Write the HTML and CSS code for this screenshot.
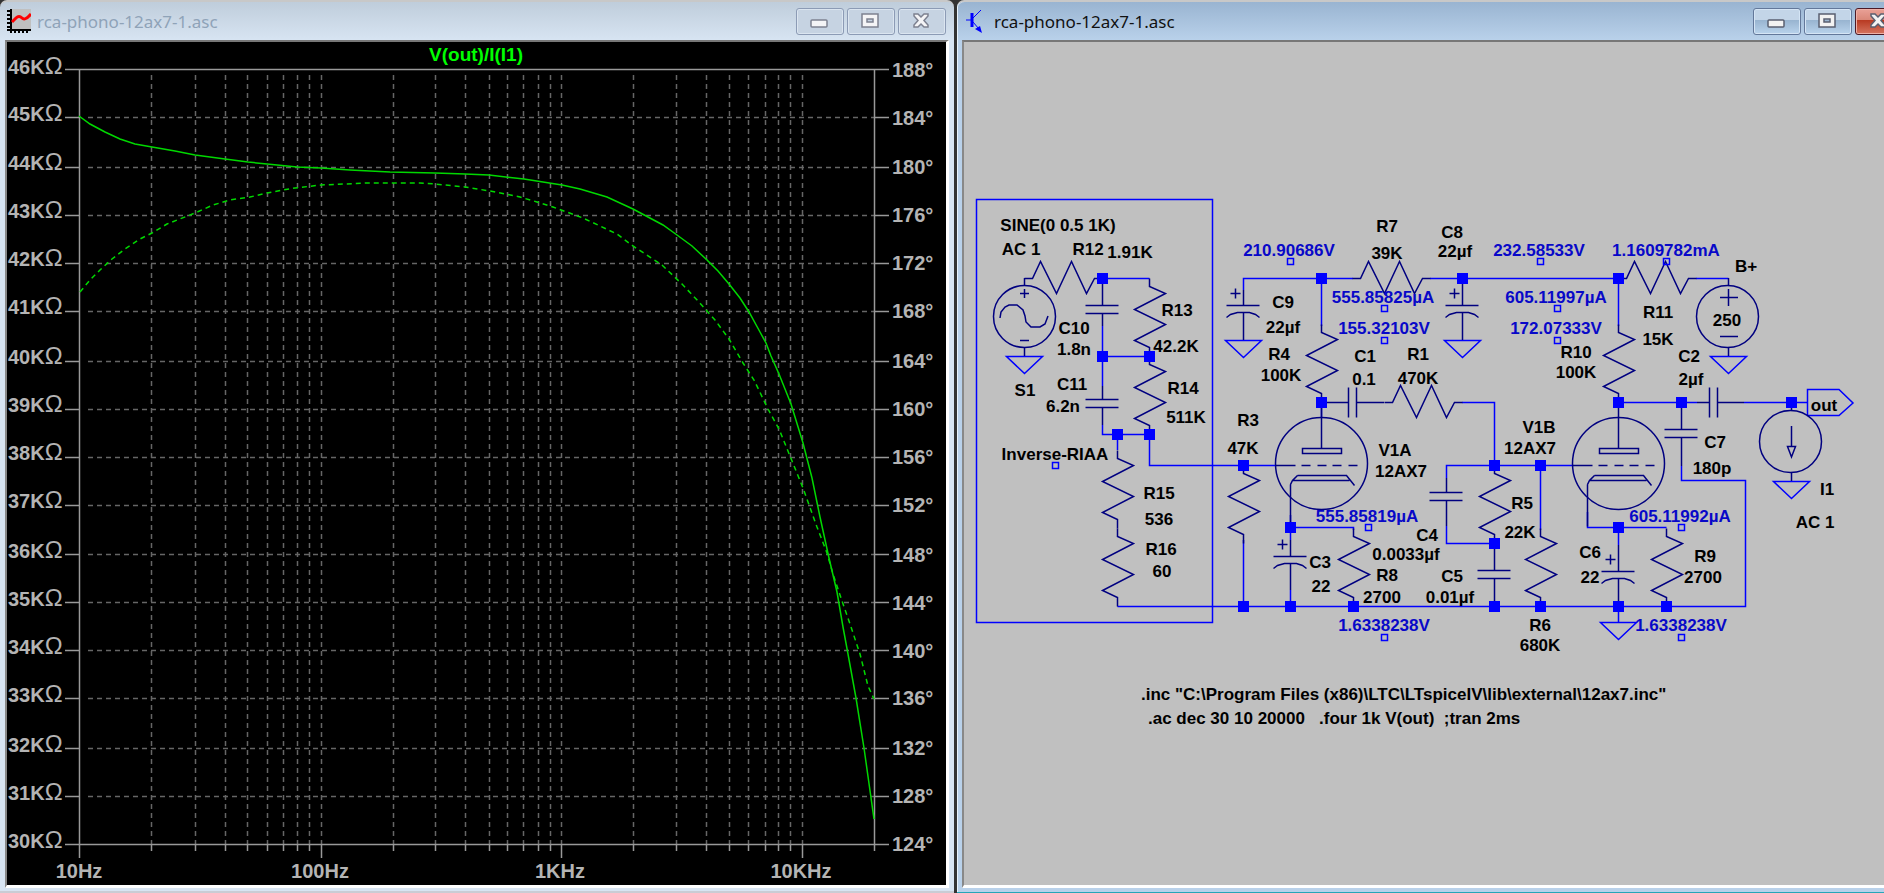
FILE: index.html
```
<!DOCTYPE html>
<html lang="en">
<head>
    <meta charset="UTF-8">
    <meta name="viewport" content="width=device-width, initial-scale=1.0">
    <title>rca-phono-12ax7-1.asc</title>
    <link rel="stylesheet" href="styles.css">
</head>
<body>

<div class="desktop">
    <section class="window inactive">
        <header class="titlebar">
            <svg class="icon" viewBox="0 0 24 24">
                <rect x="3" width="21" height="20" fill="#c0c0c0"/>
                <path d="M4 0V24M0 21H24" stroke="#000" stroke-width="2"/>
                <path d="M0 2H3M0 6H3M0 10H3M0 14H3M0 18H3M8 22V24M12 22V24M16 22V24M20 22V24" stroke="#000" stroke-width="2"/>
                <path d="M5 13L9 9Q12 6 15 9Q18 12 24 5" fill="none" stroke="#f00" stroke-width="3"/>
            </svg>
            <h1>rca-phono-12ax7-1.asc</h1>
            <div class="buttons">
                <button type="button" aria-label="Minimize"><svg viewBox="0 0 48 27"><rect class="glyph" x="15" y="12" width="16" height="7" rx="1"/></svg></button>
                <button type="button" aria-label="Maximize"><svg viewBox="0 0 48 27"><path class="glyph" fill-rule="evenodd" d="M15 6H31V19H15ZM20 11V14H26V11Z"/></svg></button>
                <button type="button" aria-label="Close"><svg viewBox="0 0 48 27"><path class="glyph" d="M16 6H20L23 9L26 6H30V8L26 12.500L30 17V19H26L23 16L20 19H16V17L20 12.500L16 8Z"/></svg></button>
            </div>
        </header>
        <div class="client plot">
            <svg viewBox="7 42 939 843" preserveAspectRatio="xMinYMin meet">
                <path class="grid" d="M151.500 75V844M195.500 75V844M225.500 75V844M247.500 75V844M267.500 75V844M283.500 75V844M297.500 75V844M309.500 75V844M321.500 75V844M393.500 75V844M435.500 75V844M465.500 75V844M489.500 75V844M507.500 75V844M523.500 75V844M538.500 75V844M550.500 75V844M561.500 75V844M633.500 75V844M676.500 75V844M706.500 75V844M729.500 75V844M748.500 75V844M765.500 75V844M778.500 75V844M790.500 75V844M802.500 75V844"/>
                <path class="grid" d="M88 117.500H874M88 167.500H874M88 215.500H874M88 263.500H874M88 311.500H874M88 361.500H874M88 409.500H874M88 457.500H874M88 505.500H874M88 554.500H874M88 602.500H874M88 650.500H874M88 698.500H874M88 748.500H874M88 796.500H874"/>
                <path class="axis" d="M65 69.500H889M65 844.500H889M79.500 70V858M874.500 70V851"/>
                <path class="axis" d="M65 117.500H80M65 167.500H80M65 215.500H80M65 263.500H80M65 311.500H80M65 361.500H80M65 409.500H80M65 457.500H80M65 505.500H80M65 554.500H80M65 602.500H80M65 650.500H80M65 698.500H80M65 748.500H80M65 796.500H80"/>
                <path class="axis" d="M875 117.500H889M875 167.500H889M875 215.500H889M875 263.500H889M875 311.500H889M875 361.500H889M875 409.500H889M875 457.500H889M875 505.500H889M875 554.500H889M875 602.500H889M875 650.500H889M875 698.500H889M875 748.500H889M875 796.500H889"/>
                <path class="axis" d="M151.500 844V851M195.500 844V851M225.500 844V851M247.500 844V851M267.500 844V851M283.500 844V851M297.500 844V851M309.500 844V851M321.500 844V858M393.500 844V851M435.500 844V851M465.500 844V851M489.500 844V851M507.500 844V851M523.500 844V851M538.500 844V851M550.500 844V851M561.500 844V858M633.500 844V851M676.500 844V851M706.500 844V851M729.500 844V851M748.500 844V851M765.500 844V851M778.500 844V851M790.500 844V851M802.500 844V858"/>

                <!-- magnitude -->
                <polyline class="trace" points="79,116 90,124 105,132 120,139 135,144 152,147 175,151 195,155 225,159 248,162 267,164 297,167 321,168 350,170 390,172 435,173 465,174 489,175 524,179 562,185 580,189 607,197 633,209 663,225 677,235 692,246 707,260 718,271 729,284 740,298 749,312 760,332 766,343 771,356 779,374 791,404 803,443 812,478 820,517 829,558 837,592 843,627 848,654 856,698 864,748 874,819"/>
                <!-- phase -->
                <polyline class="trace phase" points="80,292 90,280 100,270 112,259 125,249 140,239 152,233 167,224 195,213 213,205 230,200 250,197 267,193 283,190 295,188 321,185 367,183 400,183 420,183 435,184 465,187 490,191 520,197 537,202 553,207 583,218 617,234 633,246 662,265 682,284 698,301 715,320 729,339 743,363 754,380 768,409 779,429 790,456 803,488 817,527 827,553 833,574 842,601 850,624 860,654 868,686 874,699"/>

                <text class="legend" x="476" y="61">V(out)/I(I1)</text>

                <g class="scale">
                    <text x="8" y="74">46K<tspan>Ω</tspan></text>
                    <text x="8" y="121">45K<tspan>Ω</tspan></text>
                    <text x="8" y="170">44K<tspan>Ω</tspan></text>
                    <text x="8" y="218">43K<tspan>Ω</tspan></text>
                    <text x="8" y="266">42K<tspan>Ω</tspan></text>
                    <text x="8" y="314">41K<tspan>Ω</tspan></text>
                    <text x="8" y="364">40K<tspan>Ω</tspan></text>
                    <text x="8" y="412">39K<tspan>Ω</tspan></text>
                    <text x="8" y="460">38K<tspan>Ω</tspan></text>
                    <text x="8" y="508">37K<tspan>Ω</tspan></text>
                    <text x="8" y="558">36K<tspan>Ω</tspan></text>
                    <text x="8" y="606">35K<tspan>Ω</tspan></text>
                    <text x="8" y="654">34K<tspan>Ω</tspan></text>
                    <text x="8" y="702">33K<tspan>Ω</tspan></text>
                    <text x="8" y="752">32K<tspan>Ω</tspan></text>
                    <text x="8" y="800">31K<tspan>Ω</tspan></text>
                    <text x="8" y="848">30K<tspan>Ω</tspan></text>
                </g>
                <g class="scale">
                    <text x="892" y="77">188°</text>
                    <text x="892" y="125">184°</text>
                    <text x="892" y="174">180°</text>
                    <text x="892" y="222">176°</text>
                    <text x="892" y="270">172°</text>
                    <text x="892" y="318">168°</text>
                    <text x="892" y="368">164°</text>
                    <text x="892" y="416">160°</text>
                    <text x="892" y="464">156°</text>
                    <text x="892" y="512">152°</text>
                    <text x="892" y="562">148°</text>
                    <text x="892" y="610">144°</text>
                    <text x="892" y="658">140°</text>
                    <text x="892" y="705">136°</text>
                    <text x="892" y="755">132°</text>
                    <text x="892" y="803">128°</text>
                    <text x="892" y="851">124°</text>
                </g>
                <g class="scale freq">
                    <text x="79" y="878">10Hz</text>
                    <text x="320" y="878">100Hz</text>
                    <text x="560" y="878">1KHz</text>
                    <text x="801" y="878">10KHz</text>
                </g>
            </svg>
        </div>
    </section>

    <section class="window active">
        <header class="titlebar">
            <svg class="icon" viewBox="0 0 24 24">
                <path d="M2 11H8M9 9L17 1M9 13L15 20" stroke="#00f" stroke-width="1"/>
                <path d="M8 4V18" stroke="#00f" stroke-width="3"/>
                <path d="M18 24L11 20L16 17Z" fill="#00f"/>
            </svg>
            <h1>rca-phono-12ax7-1.asc</h1>
            <div class="buttons">
                <button type="button" aria-label="Minimize"><svg viewBox="0 0 48 27"><rect class="glyph" x="15" y="12" width="16" height="7" rx="1"/></svg></button>
                <button type="button" aria-label="Maximize"><svg viewBox="0 0 48 27"><path class="glyph" fill-rule="evenodd" d="M15 6H31V19H15ZM20 11V14H26V11Z"/></svg></button>
                <button type="button" class="close" aria-label="Close"><svg viewBox="0 0 48 27"><path class="glyph" d="M16 6H20L23 9L26 6H30V8L26 12.500L30 17V19H26L23 16L20 19H16V17L20 12.500L16 8Z"/></svg></button>
            </div>
        </header>
        <div class="client schematic">
            <svg viewBox="964 42 939 843" preserveAspectRatio="xMinYMin meet">
                <defs>
                    <path id="res-v" d="M0 0V8L16 15L-15 31L16 46L-15 62L0 69V78"/>
                    <path id="res-h" d="M0 0H8L16 -17L32 15L47 -17L62 15L70 0H78"/>
                    <path id="cap-v" d="M-17 0H16M-17 8H16"/>
                    <path id="cap-h" d="M0 -15V15M8 -15V15"/>
                    <path id="cap-pol" d="M-17 0H16M-17 12L-13 9L-6 7H6L12 9L16 12M-13 -12H-3M-8 -17V-7"/>
                    <path id="gnd" d="M-18 0H18L0 17Z"/>
                    <rect id="node" x="-5" y="-5" width="11" height="11"/>
                    <rect id="op" x="-3" y="-3" width="6" height="6"/>
                    <g id="triode">
                        <circle r="46"/>
                        <path d="M0 -61V-15M-19 -15H20V-10H-19ZM-46 2H-26M-20 2H-11M-4 2H5M11 2H20M27 2H36M-31 21V63M-24 12H25L33 22M-29 17H28M-24 12L-29 17L-31 21"/>
                    </g>
                </defs>

                <g class="wire">
                    <rect x="976.500" y="199.500" width="236" height="423"/>
                    <path d="M1102.500 278.500H1149.500M1102.500 356.500H1149.500M1102.500 326V386M1102.500 425V434.500H1149.500V465.500H1276M1117.500 434.500V450M1117.500 606.500H1745.500V480.500H1681.500V466M1243.500 540V606M1243.500 290V278.500H1353M1430 278.500H1619M1321.500 278.500V326M1321.500 402V418M1462 402.500H1494.500V466M1446.500 478V465.500H1573M1446.500 526V543.500H1494M1540.500 466V530M1290.500 515V540M1290.500 527.500H1353.500V530M1290.500 590V606M1618.500 278V326M1696 278.500H1728.500M1618.500 402.500H1697M1744 402.500H1807M1587.500 512V527.500H1666.500M1618.500 527V545M1618.500 606V622"/>
                    <path d="M1807.500 389.500H1839L1853 403L1839 415.500H1807.500Z"/>
                    <use href="#gnd" x="1024.500" y="356.500"/>
                    <use href="#gnd" x="1243.500" y="340.500"/>
                    <use href="#gnd" x="1462.500" y="340.500"/>
                    <use href="#gnd" x="1728.500" y="356.500"/>
                    <use href="#gnd" x="1791.500" y="481.500"/>
                    <use href="#gnd" x="1618.500" y="622.500"/>
                </g>

                <g class="part">
                    <use href="#res-h" x="1024.500" y="278.500"/>
                    <use href="#res-h" x="1352.500" y="278.500"/>
                    <use href="#res-h" x="1618.500" y="278.500"/>
                    <use href="#res-h" x="1384.500" y="402.500"/>
                    <use href="#res-v" x="1149.500" y="278.500"/>
                    <use href="#res-v" x="1149.500" y="356.500"/>
                    <use href="#res-v" x="1117.500" y="450.500"/>
                    <use href="#res-v" x="1117.500" y="528.500"/>
                    <use href="#res-v" x="1243.500" y="465.500"/>
                    <use href="#res-v" x="1321.500" y="324.500"/>
                    <use href="#res-v" x="1353.500" y="528.500"/>
                    <use href="#res-v" x="1494.500" y="465.500"/>
                    <use href="#res-v" x="1540.500" y="528.500"/>
                    <use href="#res-v" x="1618.500" y="324.500"/>
                    <use href="#res-v" x="1666.500" y="528.500"/>
                    <use href="#cap-v" x="1102.500" y="305.500"/>
                    <use href="#cap-v" x="1102.500" y="399.500"/>
                    <use href="#cap-v" x="1446.500" y="492.500"/>
                    <use href="#cap-v" x="1494.500" y="570.500"/>
                    <use href="#cap-v" x="1681.500" y="429.500"/>
                    <use href="#cap-h" x="1348.500" y="402.500"/>
                    <use href="#cap-h" x="1709.500" y="402.500"/>
                    <use href="#cap-pol" x="1243.500" y="305.500"/>
                    <use href="#cap-pol" x="1462.500" y="305.500"/>
                    <use href="#cap-pol" x="1290.500" y="556.500"/>
                    <use href="#cap-pol" x="1618.500" y="571.500"/>
                    <use href="#triode" x="1321.500" y="463.500"/>
                    <use href="#triode" x="1618.500" y="463.500"/>
                    <path d="M1102.500 278V305M1102.500 314V326M1102.500 386V399M1102.500 408V425M1446.500 478V492M1446.500 501V526M1494.500 544V570M1494.500 579V606M1681.500 402V429M1681.500 438V466M1321 402.500H1348M1357 402.500H1384M1697 402.500H1709M1718 402.500H1744"/>
                    <path d="M1243.500 290V305M1243.500 313V340M1462.500 278V305M1462.500 313V340M1290.500 540V556M1290.500 564V590M1618.500 545V571M1618.500 579V606"/>

                    <!-- S1 -->
                    <circle cx="1024.500" cy="316.500" r="31"/>
                    <path d="M1024.500 278V285M1024.500 347V356M1020 293.500H1029M1024.500 289V298M1020 340.500H1029M1000 318L1001 312L1005 307L1009 305H1017L1023 310L1025 316L1026 322L1031 327H1040L1045 324L1048 316"/>
                    <!-- B+ -->
                    <circle cx="1727.500" cy="316.500" r="31"/>
                    <path d="M1728.500 278V285M1728.500 347V356M1720 297.500H1738M1728.500 289V306M1720 336.500H1738"/>
                    <!-- I1 -->
                    <circle cx="1790.500" cy="441.500" r="31"/>
                    <path d="M1791.500 402V410M1791.500 472V481M1791.500 426V447M1787.500 446.500H1795.500L1791.500 457Z"/>
                </g>

                <g class="nodes">
                    <use href="#node" x="1102" y="278"/>
                    <use href="#node" x="1102" y="356"/>
                    <use href="#node" x="1149" y="356"/>
                    <use href="#node" x="1117" y="434"/>
                    <use href="#node" x="1149" y="434"/>
                    <use href="#node" x="1243" y="465"/>
                    <use href="#node" x="1243" y="606"/>
                    <use href="#node" x="1290" y="527"/>
                    <use href="#node" x="1290" y="606"/>
                    <use href="#node" x="1321" y="278"/>
                    <use href="#node" x="1321" y="402"/>
                    <use href="#node" x="1353" y="606"/>
                    <use href="#node" x="1462" y="278"/>
                    <use href="#node" x="1494" y="465"/>
                    <use href="#node" x="1494" y="543"/>
                    <use href="#node" x="1494" y="606"/>
                    <use href="#node" x="1540" y="465"/>
                    <use href="#node" x="1540" y="606"/>
                    <use href="#node" x="1618" y="278"/>
                    <use href="#node" x="1618" y="402"/>
                    <use href="#node" x="1618" y="527"/>
                    <use href="#node" x="1618" y="606"/>
                    <use href="#node" x="1666" y="606"/>
                    <use href="#node" x="1681" y="402"/>
                    <use href="#node" x="1791" y="402"/>
                </g>

                <g class="wire">
                    <use href="#op" x="1055.500" y="465.500"/>
                    <use href="#op" x="1290.500" y="261.500"/>
                    <use href="#op" x="1384.500" y="308.500"/>
                    <use href="#op" x="1384.500" y="340.500"/>
                    <use href="#op" x="1540.500" y="261.500"/>
                    <use href="#op" x="1557.500" y="308.500"/>
                    <use href="#op" x="1557.500" y="340.500"/>
                    <use href="#op" x="1666.500" y="261.500"/>
                    <use href="#op" x="1368.500" y="527.500"/>
                    <use href="#op" x="1681.500" y="527.500"/>
                    <use href="#op" x="1384.500" y="637.500"/>
                    <use href="#op" x="1681.500" y="637.500"/>
                </g>

                <g class="label">
                    <text x="1058" y="231">SINE(0 0.5 1K)</text>
                    <text x="1021" y="255">AC 1</text>
                    <text x="1088" y="255">R12</text>
                    <text x="1130" y="258">1.91K</text>
                    <text x="1177" y="316">R13</text>
                    <text x="1176" y="352">42.2K</text>
                    <text x="1074" y="334">C10</text>
                    <text x="1074" y="355">1.8n</text>
                    <text x="1072" y="390">C11</text>
                    <text x="1063" y="412">6.2n</text>
                    <text x="1183" y="394">R14</text>
                    <text x="1186" y="423">511K</text>
                    <text x="1025" y="396">S1</text>
                    <text x="1055" y="460">Inverse-RIAA</text>
                    <text x="1159" y="499">R15</text>
                    <text x="1159" y="525">536</text>
                    <text x="1161" y="555">R16</text>
                    <text x="1162" y="577">60</text>
                    <text x="1248" y="426">R3</text>
                    <text x="1243" y="454">47K</text>
                    <text x="1387" y="232">R7</text>
                    <text x="1387" y="259">39K</text>
                    <text x="1452" y="238">C8</text>
                    <text x="1455" y="257">22µf</text>
                    <text x="1283" y="308">C9</text>
                    <text x="1283" y="333">22µf</text>
                    <text x="1279" y="360">R4</text>
                    <text x="1281" y="381">100K</text>
                    <text x="1365" y="362">C1</text>
                    <text x="1364" y="385">0.1</text>
                    <text x="1418" y="360">R1</text>
                    <text x="1418" y="384">470K</text>
                    <text x="1395" y="456">V1A</text>
                    <text x="1401" y="477">12AX7</text>
                    <text x="1320" y="568">C3</text>
                    <text x="1321" y="592">22</text>
                    <text x="1387" y="581">R8</text>
                    <text x="1382" y="603">2700</text>
                    <text x="1406" y="560">0.0033µf</text>
                    <text x="1427" y="541">C4</text>
                    <text x="1452" y="582">C5</text>
                    <text x="1450" y="603">0.01µf</text>
                    <text x="1522" y="509">R5</text>
                    <text x="1520" y="538">22K</text>
                    <text x="1539" y="433">V1B</text>
                    <text x="1530" y="454">12AX7</text>
                    <text x="1540" y="631">R6</text>
                    <text x="1540" y="651">680K</text>
                    <text x="1746" y="272">B+</text>
                    <text x="1727" y="326">250</text>
                    <text x="1658" y="318">R11</text>
                    <text x="1658" y="345">15K</text>
                    <text x="1689" y="362">C2</text>
                    <text x="1691" y="385">2µf</text>
                    <text x="1576" y="358">R10</text>
                    <text x="1576" y="378">100K</text>
                    <text x="1715" y="448">C7</text>
                    <text x="1712" y="474">180p</text>
                    <text x="1824" y="411">out</text>
                    <text x="1827" y="495">I1</text>
                    <text x="1815" y="528">AC 1</text>
                    <text x="1590" y="558">C6</text>
                    <text x="1590" y="583">22</text>
                    <text x="1705" y="562">R9</text>
                    <text x="1703" y="583">2700</text>
                </g>

                <g class="label reading">
                    <text x="1289" y="256">210.90686V</text>
                    <text x="1383" y="303">555.85825µA</text>
                    <text x="1384" y="334">155.32103V</text>
                    <text x="1539" y="256">232.58533V</text>
                    <text x="1556" y="303">605.11997µA</text>
                    <text x="1556" y="334">172.07333V</text>
                    <text x="1666" y="256">1.1609782mA</text>
                    <text x="1367" y="522">555.85819µA</text>
                    <text x="1680" y="522">605.11992µA</text>
                    <text x="1384" y="631">1.6338238V</text>
                    <text x="1681" y="631">1.6338238V</text>
                </g>

                <g class="label directive">
                    <text x="1141" y="700">.inc "C:\Program Files (x86)\LTC\LTspiceIV\lib\external\12ax7.inc"</text>
                    <text x="1148" y="724">.ac dec 30 10 20000&nbsp;&nbsp; .four 1k V(out)&nbsp; ;tran 2ms</text>
                </g>
            </svg>
        </div>
    </section>
</div>

</body>
</html>
```

FILE: styles.css
```
body {
    margin: 0;
    overflow: hidden;
    background-color: #333;
    font-family: "Liberation Sans", Arial, sans-serif;
}
/* the schematic window hangs over the right edge of the screen */
.desktop {
    display: flex;
    gap: 3px;
    height: 100vh;
    margin-right: -27px;
}
.window {
    flex: 1;
    min-width: 0;
    box-sizing: border-box;
    display: flex;
    flex-direction: column;
    padding: 0 5px 5px;
    border-top: 2px solid #c8c8c8;
    border-radius: 7px 7px 0 0;
}
.inactive {
    background: linear-gradient(#bfcddb, #d7e4f2 38px);
    box-shadow: inset 0 -2px #c9ccd4;
}
.active {
    background: linear-gradient(#99b4d1, #b9d1ea 38px);
    box-shadow: inset 0 -1px #27a6b8, inset 1px 0 #e8f2fb;
}
.titlebar {
    display: flex;
    align-items: center;
    height: 38px;
    padding: 0 3px 0 2px;
}
.icon {
    width: 24px;
    height: 24px;
    margin-right: 6px;
}
h1 {
    flex: 1;
    margin: 0;
    font: 17px "Noto Sans", "Open Sans", sans-serif;
    color: #111;
}
.inactive h1 {
    color: #8fa3b8;
}
.buttons {
    display: flex;
    gap: 3px;
}
button {
    box-sizing: border-box;
    width: 48px;
    height: 27px;
    padding: 0;
    border: 1px solid #8c9bb5;
    border-radius: 3px;
    background: #c6d3e2;
    box-shadow: inset 0 0 0 1px #dbe5f0;
}
button svg {
    display: block;
    width: 48px;
    height: 27px;
    margin: -1px;
}
.active button {
    border-color: #63789a;
    background: linear-gradient(#c3d5e8 45%, #98b4d0 45%, #b9d3ec);
    box-shadow: inset 0 0 0 1px #d5e5f5;
}
.active .close {
    border-color: #4c1a26;
    background: linear-gradient(#e9a197 0, #d98677 45%, #b83a22 45%, #d5745f);
    box-shadow: inset 0 0 0 1px #eeb0a6;
}
.glyph {
    fill: #f2f2f2;
    stroke: #5a5f70;
    stroke-width: 1.5;
}
.inactive .glyph {
    fill: #f4f4f6;
    stroke: #7d8190;
}
.client {
    flex: 1;
    min-height: 0;
    border-style: solid;
    border-width: 2px 3px 3px 2px;
    border-color: #777 #fff #fff #888;
}
.client svg {
    display: block;
    width: 100%;
    height: 100%;
}
.plot {
    background-color: #000;
}
.schematic {
    background-color: #c0c0c0;
}

.grid {
    stroke: #666;
    stroke-width: 1.5;
    stroke-dasharray: 5 4;
}
.axis {
    stroke: #999;
    stroke-width: 1.5;
}
.trace {
    fill: none;
    stroke: #00d800;
    stroke-width: 1.5;
}
.phase {
    stroke-dasharray: 5 4;
}
.scale {
    fill: #b4b4b4;
    font-size: 20px;
    font-weight: bold;
}
.scale tspan {
    font-size: 24px;
    font-weight: normal;
}
.freq, .legend, .label {
    text-anchor: middle;
}
.legend {
    fill: #0f0;
    font-size: 19px;
    font-weight: bold;
}

.wire, .part {
    fill: none;
    stroke: #00f;
    stroke-width: 1.5;
}
.part {
    stroke: #000080;
}
.nodes {
    fill: #00f;
}
.label {
    fill: #000;
    font-size: 17px;
    font-weight: bold;
}
.reading {
    fill: #0808c8;
}
.directive {
    text-anchor: start;
}
```
